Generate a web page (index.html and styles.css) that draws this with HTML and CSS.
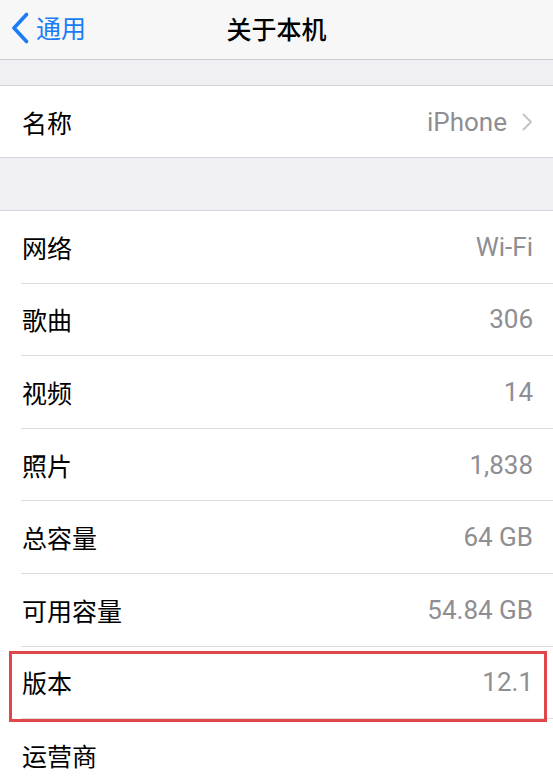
FILE: index.html
```html
<!DOCTYPE html>
<html lang="zh-CN">
	<head>
		<meta charset="utf-8">
		<title>关于本机</title>
		<link rel="stylesheet" href="styles.css">
	</head>
	<body>
		<div class="navbar">
			<a class="back" href="#">
				<svg class="back-icon" width="20" height="32" viewBox="0 0 20 32">
					<path d="M16.5 2.5 L4 16 L16.5 29.5" fill="none" stroke="#1a7cf6" stroke-width="3.6" stroke-linecap="round" stroke-linejoin="round"/>
				</svg>
				<span>通用</span>
			</a>
			<div class="title">关于本机</div>
		</div>

		<div class="gap gap-top"></div>
		<div class="group">
			<div class="row row-name">
				<span class="label">名称</span>
				<span class="value">iPhone</span>
				<svg class="chevron" width="11" height="18" viewBox="0 0 11 18">
					<path d="M1.5 1.5 L9 9 L1.5 16.5" fill="none" stroke="#c4c4c9" stroke-width="2" stroke-linecap="round" stroke-linejoin="round"/>
				</svg>
			</div>
		</div>

		<div class="gap gap-mid"></div>
		<div class="group">
			<div class="row"><span class="label">网络</span><span class="value">Wi-Fi</span></div>
			<div class="row"><span class="label">歌曲</span><span class="value">306</span></div>
			<div class="row"><span class="label">视频</span><span class="value">14</span></div>
			<div class="row"><span class="label">照片</span><span class="value">1,838</span></div>
			<div class="row"><span class="label">总容量</span><span class="value">64 GB</span></div>
			<div class="row"><span class="label">可用容量</span><span class="value">54.84 GB</span></div>
			<div class="row marked"><span class="label">版本</span><span class="value">12.1</span></div>
			<div class="row"><span class="label">运营商</span><span class="value"></span></div>
		</div>
	</body>
</html>
```

FILE: styles.css
```css
body {
	margin: 0;
	background-color: #efeff4;
	font-family: Roboto, "Noto Sans CJK SC", sans-serif;
	color: #000;
	overflow: hidden;
}

.navbar {
	height: 59px;
	background-color: #f7f7f8;
	border-bottom: 1px solid #cfcfd3;
	display: flex;
	align-items: center;
	justify-content: center;
	position: relative;
}
.back {
	position: absolute;
	left: 10px;
	top: 11px;
	display: flex;
	align-items: center;
	gap: 6px;
	color: #1a7cf6;
	text-decoration: none;
	font-size: 25px;
}
.back span {
	margin-top: -2px;
}
.title {
	font-size: 25px;
	font-weight: 500;
	margin-top: -4px;
}

.gap-top { height: 25px; }
.gap-mid { height: 52px; }

.group {
	background-color: #fff;
	border-top: 1px solid #d6d6da;
	border-bottom: 1px solid #d6d6da;
	padding-left: 21px;
}
.row {
	height: 72.6px;
	box-sizing: border-box;
	display: flex;
	align-items: center;
	padding-right: 20px;
	font-size: 25px;
	border-bottom: 1px solid #dcdce0;
}
.row:last-child {
	border-bottom: none;
}
.row-name {
	height: 71px;
}
.label {
	padding-left: 1px;
	flex: 1;
}
.value {
	color: #8e8e93;
	font-size: 26px;
}
.chevron {
	margin-left: 15px;
	margin-right: 0;
}

/* highlighted row frame */
.marked {
	position: relative;
}
.marked::after {
	content: "";
	position: absolute;
	left: -12px;
	right: 6px;
	top: 4px;
	bottom: -4px;
	border: 3px solid #e0474b;
}
```
